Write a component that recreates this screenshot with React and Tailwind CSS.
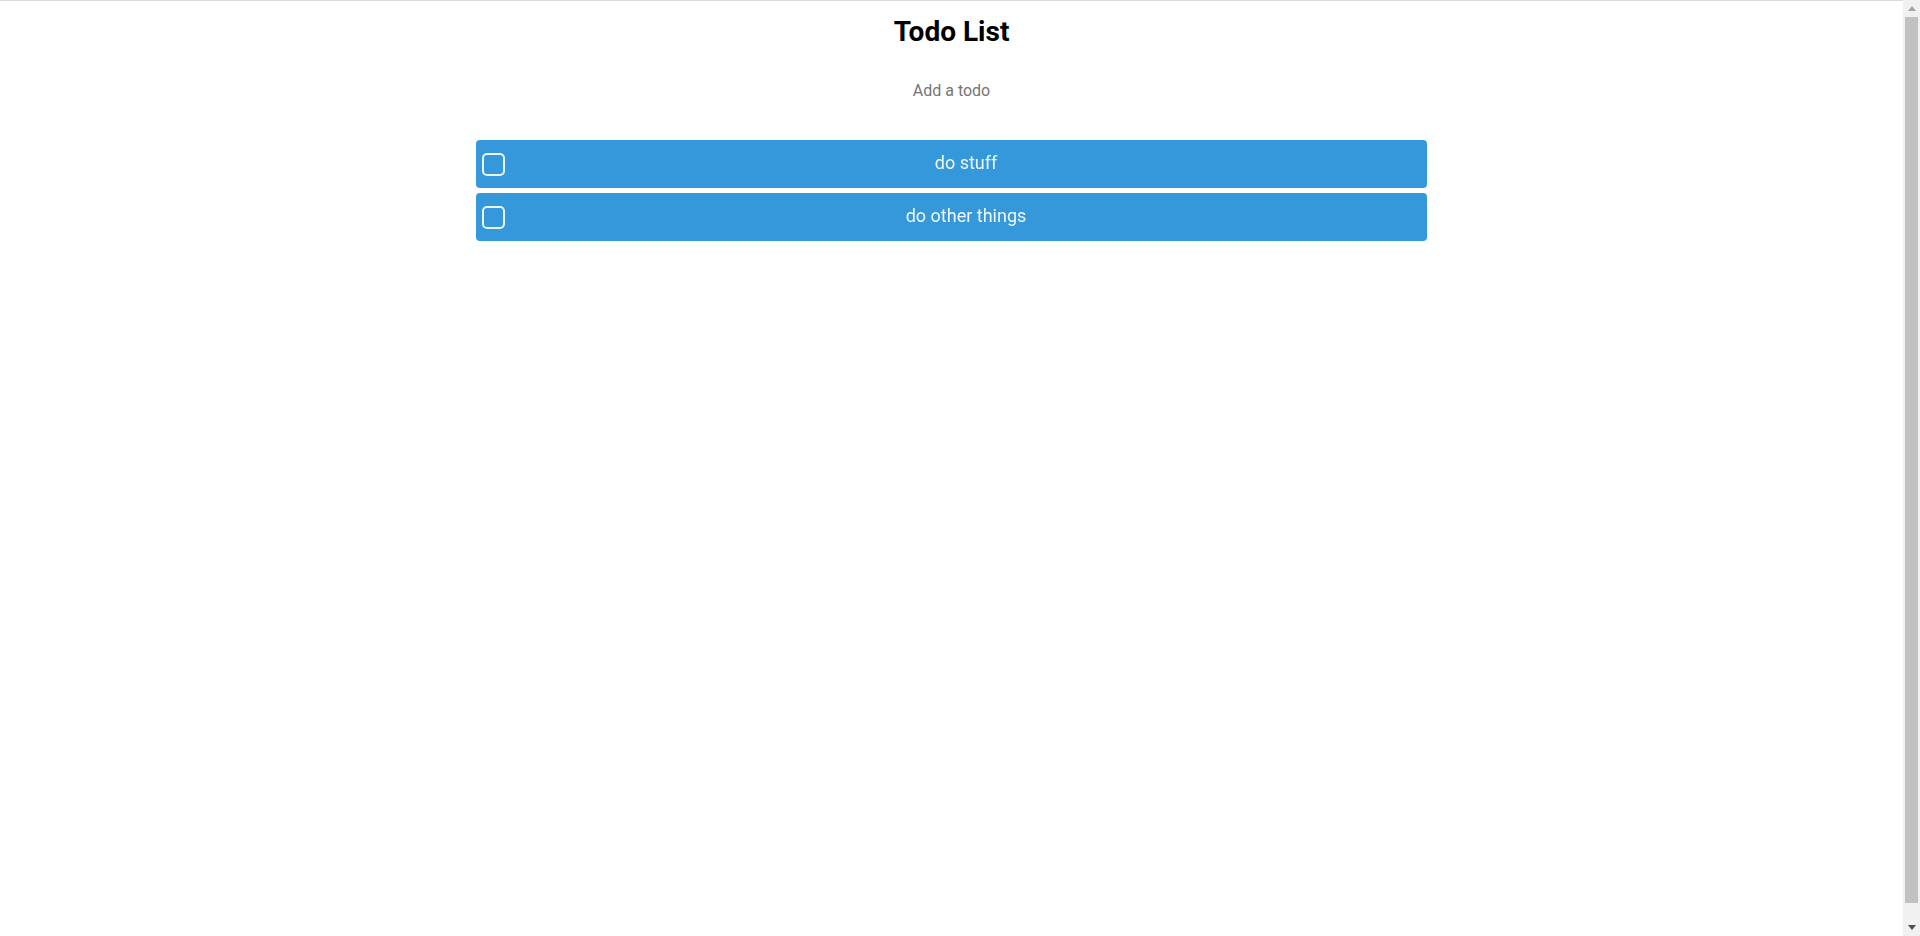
import React, { useState } from "react";

const FONT = { fontFamily: "Roboto, 'Liberation Sans', sans-serif" };

const START_TODOS = [
  { id: 1, text: "do stuff", done: false },
  { id: 2, text: "do other things", done: false },
];

function TodoRow({ todo, onToggle }) {
  return (
    <div className="flex items-center h-12 bg-[#3498db] rounded text-white px-[6px]">
      <button
        onClick={() => onToggle(todo.id)}
        className="w-[23px] h-[23px] mr-[6px] shrink-0 border-2 border-[#eaf6ff] rounded-[5px] flex items-center justify-center"
      >
        {todo.done && <span className="text-xs">✓</span>}
      </button>
      <span className="flex-1 text-center text-[18px] text-[#eef7ff] pb-[4px]">{todo.text}</span>
    </div>
  );
}

// window scrollbar as seen in the screenshot
function Scrollbar() {
  return (
    <div className="w-[17px] shrink-0 bg-[#f1f1f1] flex flex-col items-center">
      <div className="h-[17px] flex items-center justify-center">
        <svg width="8" height="5" viewBox="0 0 8 5"><path d="M0 5 L4 0 L8 5 Z" fill="#a3a3a3" /></svg>
      </div>
      <div className="w-[13px] flex-1 bg-[#c1c1c1]" />
      <div className="h-[16px]" />
      <div className="h-[17px] flex items-center justify-center">
        <svg width="8" height="5" viewBox="0 0 8 5"><path d="M0 0 L8 0 L4 5 Z" fill="#505050" /></svg>
      </div>
    </div>
  );
}

export default function App() {
  const [todos, setTodos] = useState(START_TODOS);
  const [draft, setDraft] = useState("");

  const toggle = (id) => setTodos((prev) => prev.map((t) => (t.id === id ? { ...t, done: !t.done } : t)));

  const add = (e) => {
    e.preventDefault();
    if (!draft.trim()) return;
    setTodos((prev) => [...prev, { id: Date.now(), text: draft.trim(), done: false }]);
    setDraft("");
  };

  return (
    <div className="h-screen flex bg-white overflow-hidden" style={FONT}>
      <div className="flex-1 border-t border-[#dadada]">
        <h1 className="text-center text-[28px] font-bold text-black leading-none pt-[17px]">Todo List</h1>
        <form onSubmit={add} className="flex justify-center mt-[33px]">
          <input
            autoFocus
            value={draft}
            onChange={(e) => setDraft(e.target.value)}
            placeholder="Add a todo"
            className="w-[300px] text-center text-base text-black placeholder-[#757575] outline-none bg-transparent"
          />
        </form>
        <div className="w-1/2 mx-auto mt-[37px] flex flex-col gap-[5px]">
          {todos.map((t) => (
            <TodoRow key={t.id} todo={t} onToggle={toggle} />
          ))}
        </div>
      </div>
      <Scrollbar />
    </div>
  );
}
